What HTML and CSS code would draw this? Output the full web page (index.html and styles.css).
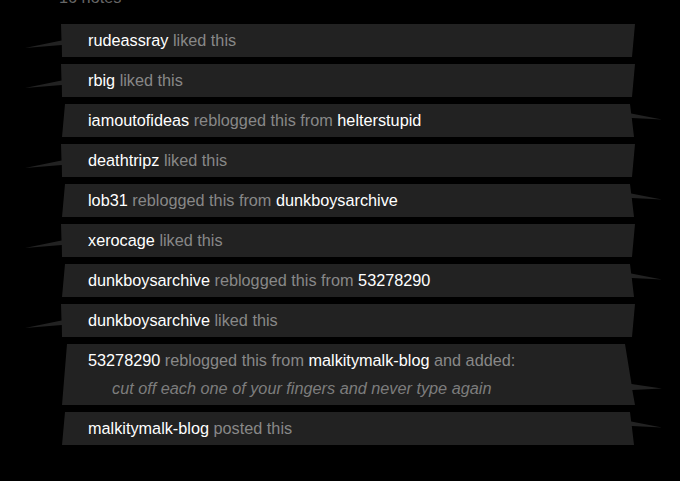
FILE: index.html
```html
<!DOCTYPE html>
<html>
<head>
<meta charset="utf-8">
<link rel="stylesheet" href="styles.css">
</head>
<body>
<div class="notes">
  <div class="notes-count">16 notes</div>
  <ol class="note-list">
    <li class="note like"><span class="user">rudeassray</span> <span class="action">liked this</span></li>
    <li class="note like"><span class="user">rbig</span> <span class="action">liked this</span></li>
    <li class="note reblog"><span class="user">iamoutofideas</span> <span class="action">reblogged this from</span> <span class="user">helterstupid</span></li>
    <li class="note like"><span class="user">deathtripz</span> <span class="action">liked this</span></li>
    <li class="note reblog"><span class="user">lob31</span> <span class="action">reblogged this from</span> <span class="user">dunkboysarchive</span></li>
    <li class="note like"><span class="user">xerocage</span> <span class="action">liked this</span></li>
    <li class="note reblog"><span class="user">dunkboysarchive</span> <span class="action">reblogged this from</span> <span class="user">53278290</span></li>
    <li class="note like"><span class="user">dunkboysarchive</span> <span class="action">liked this</span></li>
    <li class="note reblog tall"><span class="user">53278290</span> <span class="action">reblogged this from</span> <span class="user">malkitymalk-blog</span> <span class="action">and added:</span>
      <div class="comment">cut off each one of your fingers and never type again</div>
    </li>
    <li class="note reblog"><span class="user">malkitymalk-blog</span> <span class="action">posted this</span></li>
  </ol>
</div>
</body>
</html>
```
FILE: styles.css
```css
html, body {
  margin: 0;
  padding: 0;
  background: #000;
}
body {
  font-family: "Liberation Sans", Arial, sans-serif;
  font-size: 16.25px;
  color: #fff;
}
.notes-count {
  color: #666;
  margin-left: 59px;
  line-height: 18px;
  height: 18px;
  margin-top: -12px;
  margin-bottom: 18px;
}
.note-list {
  list-style: none;
  margin: 0;
  padding: 0;
  display: flex;
  flex-direction: column;
  gap: 7px;
}
.note {
  margin-left: 25px;
  width: 574px;
  padding-left: 63px;
  height: 33px;
  line-height: 33px;
  background: #222;
  white-space: nowrap;
}
.note.like {
  clip-path: polygon(36px 0, 610px 0, 607px 100%, 37px 100%, 36.8px 21px, 0 24px, 36.5px 16.5px);
}
.note.reblog {
  clip-path: polygon(40px 0, 605px 0, 606.2px 9.5px, 637px 15.5px, 606.8px 14px, 609px 100%, 37px 100%);
}
.note.reblog.tall {
  height: 61px;
  clip-path: polygon(42px 0, 600px 0, 606.5px 40px, 637px 44.5px, 607.3px 46px, 610px 100%, 37px 100%);
}
.user {
  color: #fff;
}
.action {
  color: #888;
}
.comment {
  margin-left: 24px;
  line-height: 22px;
  font-style: italic;
  color: #7d7d7d;
}
```
